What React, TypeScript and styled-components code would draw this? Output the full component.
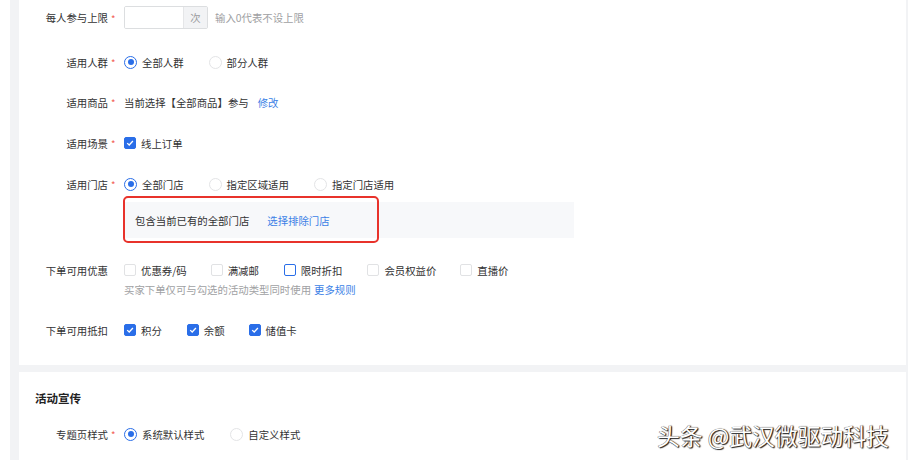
import React from "react";
import styled, { createGlobalStyle } from "styled-components";

const Global = createGlobalStyle`
  html, body { margin: 0; padding: 0; background: #ffffff; }
  body {
    font-family: "Noto Sans CJK SC", "Noto Sans", sans-serif;
    font-size: 10.4px;
    color: #323233;
    overflow: hidden;
  }
  * { box-sizing: border-box; }
`;

const Page = styled.div`
  position: relative;
  width: 898px;
  height: 460px;
  overflow: hidden;
  margin-left: 10px;
  background: #f2f3f5;
  padding-left: 9px;
  padding-right: 2px;
  display: flex;
  flex-direction: column;
  gap: 7px;
`;

const Card = styled.div<{ $pt: number; $pb: number }>`
  background: #ffffff;
  width: 887px;
  padding-top: ${(p) => p.$pt}px;
  padding-bottom: ${(p) => p.$pb}px;
  display: flex;
  flex-direction: column;
  flex-shrink: 0;
`;

const SectionTitle = styled.div`
  padding-left: 16px;
  height: 20px;
  line-height: 20px;
  font-size: 11.5px;
  font-weight: 700;
  color: #222;
  margin-bottom: 16px;
`;

const FormItem = styled.div<{ $mb?: number }>`
  display: flex;
  align-items: flex-start;
  margin-bottom: ${(p) => p.$mb ?? 0}px;
`;

const Label = styled.div<{ $h?: number }>`
  width: 105px;
  flex-shrink: 0;
  display: flex;
  justify-content: flex-end;
  align-items: center;
  height: ${(p) => p.$h ?? 20}px;
  padding-right: 4px;
  white-space: nowrap;
  color: #323233;
`;

const Star = styled.span<{ $show: boolean }>`
  width: 9px;
  margin-left: 3px;
  color: #f25a50;
  font-size: 9.5px;
  visibility: ${(p) => (p.$show ? "visible" : "hidden")};
  text-align: left;
  padding-top: 2px;
`;

const Control = styled.div`
  display: flex;
  flex-direction: column;
`;

const Line = styled.div<{ $h?: number }>`
  display: flex;
  align-items: center;
  height: ${(p) => p.$h ?? 20}px;
  white-space: nowrap;
`;

const InputGroup = styled.div`
  display: flex;
  height: 23px;
  border: 1px solid #dcdee0;
  border-radius: 2px;
  overflow: hidden;
`;

const InputBox = styled.div`
  width: 58px;
  background: #fff;
`;

const Addon = styled.div`
  width: 24px;
  background: #f2f3f5;
  border-left: 1px solid #e5e6e8;
  color: #9b9c9e;
  display: flex;
  align-items: center;
  justify-content: center;
`;

const Hint = styled.span<{ $ml?: number }>`
  color: #a0a1a3;
  margin-left: ${(p) => p.$ml ?? 0}px;
`;

const HintLine = styled.div`
  margin-top: 2px;
  height: 16px;
  line-height: 16px;
  color: #a0a1a3;
  white-space: nowrap;
`;

const Link = styled.span<{ $ml?: number }>`
  color: #3b7fe6;
  margin-left: ${(p) => p.$ml ?? 0}px;
`;

const Option = styled.label<{ $mr: number }>`
  display: flex;
  align-items: center;
  margin-right: ${(p) => p.$mr}px;
  color: #323233;
`;

const RadioDot = styled.span<{ $checked?: boolean }>`
  width: 13px;
  height: 13px;
  border-radius: 50%;
  border: ${(p) => (p.$checked ? "1.5px solid #2a6ee8" : "1px solid #e3e4e6")};
  background: #fff;
  display: flex;
  align-items: center;
  justify-content: center;
  margin-right: 5px;
  flex-shrink: 0;
  &::after {
    content: "";
    width: 6px;
    height: 6px;
    border-radius: 50%;
    background: ${(p) => (p.$checked ? "#2a6ee8" : "transparent")};
  }
`;

const CheckBox = styled.span<{ $state: "on" | "off" | "focus" }>`
  width: 12px;
  height: 12px;
  border-radius: 2px;
  flex-shrink: 0;
  margin-right: 5px;
  display: flex;
  align-items: center;
  justify-content: center;
  background: ${(p) => (p.$state === "on" ? "#2a6ee8" : "#fff")};
  border: 1px solid
    ${(p) => (p.$state === "off" ? "#e1e2e4" : "#2a6ee8")};
`;

const InfoBox = styled.div`
  margin-top: 8px;
  width: 450px;
  height: 36px;
  background: #f7f8fa;
  display: flex;
  align-items: center;
  padding-left: 11px;
  position: relative;
`;

const Highlight = styled.div`
  position: absolute;
  left: -1px;
  top: -6px;
  width: 256px;
  height: 47px;
  border: 2px solid #e8322b;
  border-radius: 5px;
  pointer-events: none;
`;

const Watermark = styled.div`
  position: absolute;
  left: 647px;
  top: 419px;
  font-size: 22.8px;
  color: #ffffff;
  font-family: "Noto Sans CJK SC", sans-serif;
  text-shadow: 1px 1px 1px #222, -0.5px -0.5px 0 #666, 1px 0 1px #333;
  white-space: nowrap;
`;

const Check = () => (
  <svg width="8" height="8" viewBox="0 0 8 8">
    <path d="M1.2 4.1 L3.2 6 L6.9 2" stroke="#fff" strokeWidth="1.3" fill="none" />
  </svg>
);

const Radio = ({ checked, label, mr }: { checked?: boolean; label: string; mr: number }) => (
  <Option $mr={mr}>
    <RadioDot $checked={checked} />
    {label}
  </Option>
);

const CheckOpt = ({ state, label, mr }: { state: "on" | "off" | "focus"; label: string; mr: number }) => (
  <Option $mr={mr}>
    <CheckBox $state={state}>{state === "on" && <Check />}</CheckBox>
    {label}
  </Option>
);

export default function App() {
  return (
    <>
      <Global />
      <Page>
        <Card $pt={6} $pb={25}>
          <FormItem $mb={23}>
            <Label $h={23}>
              每人参与上限<Star $show>*</Star>
            </Label>
            <Control>
              <Line $h={23}>
                <InputGroup>
                  <InputBox />
                  <Addon>次</Addon>
                </InputGroup>
                <Hint $ml={7}>输入0代表不设上限</Hint>
              </Line>
            </Control>
          </FormItem>

          <FormItem $mb={20}>
            <Label>
              适用人群<Star $show>*</Star>
            </Label>
            <Line>
              <Radio checked label="全部人群" mr={25} />
              <Radio label="部分人群" mr={0} />
            </Line>
          </FormItem>

          <FormItem $mb={21}>
            <Label>
              适用商品<Star $show>*</Star>
            </Label>
            <Line>
              当前选择【全部商品】参与
              <Link $ml={9}>修改</Link>
            </Line>
          </FormItem>

          <FormItem $mb={21}>
            <Label>
              适用场景<Star $show>*</Star>
            </Label>
            <Line>
              <CheckOpt state="on" label="线上订单" mr={0} />
            </Line>
          </FormItem>

          <FormItem $mb={22}>
            <Label>
              适用门店<Star $show>*</Star>
            </Label>
            <Control>
              <Line>
                <Radio checked label="全部门店" mr={25} />
                <Radio label="指定区域适用" mr={25} />
                <Radio label="指定门店适用" mr={0} />
              </Line>
              <InfoBox>
                包含当前已有的全部门店
                <Link $ml={18}>选择排除门店</Link>
                <Highlight />
              </InfoBox>
            </Control>
          </FormItem>

          <FormItem $mb={22}>
            <Label>
              下单可用优惠<Star $show={false}>*</Star>
            </Label>
            <Control>
              <Line>
                <CheckOpt state="off" label="优惠券/码" mr={24} />
                <CheckOpt state="off" label="满减邮" mr={25} />
                <CheckOpt state="focus" label="限时折扣" mr={25} />
                <CheckOpt state="off" label="会员权益价" mr={24} />
                <CheckOpt state="off" label="直播价" mr={0} />
              </Line>
              <HintLine>
                买家下单仅可与勾选的活动类型同时使用
                <Link $ml={3}>更多规则</Link>
              </HintLine>
            </Control>
          </FormItem>

          <FormItem>
            <Label>
              下单可用抵扣<Star $show={false}>*</Star>
            </Label>
            <Line>
              <CheckOpt state="on" label="积分" mr={25} />
              <CheckOpt state="on" label="余额" mr={24} />
              <CheckOpt state="on" label="储值卡" mr={0} />
            </Line>
          </FormItem>
        </Card>

        <Card $pt={16} $pb={40}>
          <SectionTitle>活动宣传</SectionTitle>
          <FormItem>
            <Label>
              专题页样式<Star $show>*</Star>
            </Label>
            <Line>
              <Radio checked label="系统默认样式" mr={26} />
              <Radio label="自定义样式" mr={0} />
            </Line>
          </FormItem>
        </Card>

        <Watermark>头条 @武汉微驱动科技</Watermark>
      </Page>
    </>
  );
}
